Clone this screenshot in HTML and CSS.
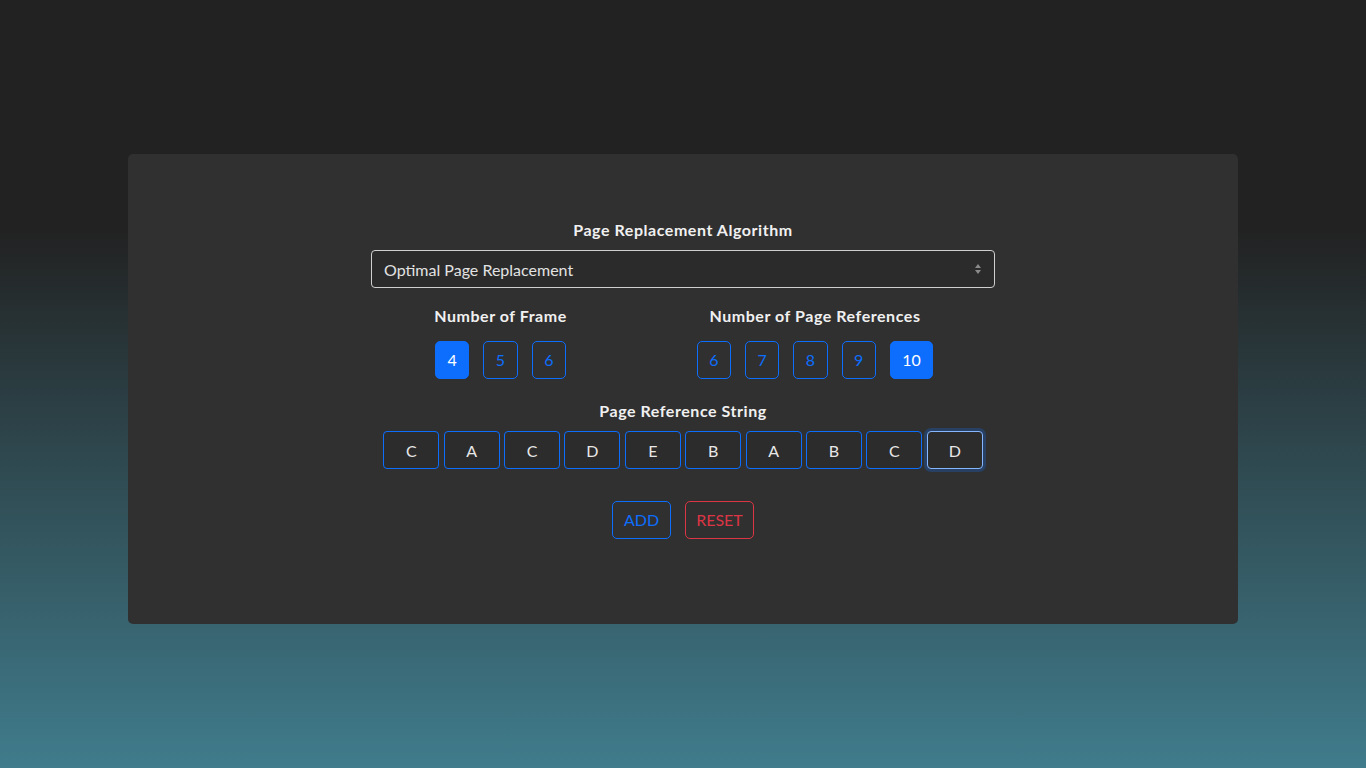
FILE: index.html
```html
<!DOCTYPE html>
<html lang="en">
<head>
<meta charset="utf-8">
<title>Page Replacement Algorithm</title>
<link rel="stylesheet" href="styles.css">
</head>
<body>
<main class="page">
  <section class="card">
    <div class="field">
      <label class="label" for="algo">Page Replacement Algorithm</label>
      <div class="select-wrap">
        <select id="algo" class="select">
          <option>Optimal Page Replacement</option>
        </select>
        <svg class="select-arrows" width="8" height="12" viewBox="0 0 8 12"><path d="M4 1 L7 5 H1 Z M4 11 L7 7 H1 Z" fill="#8a8a8a"/></svg>
      </div>
    </div>

    <div class="counts">
      <div class="count-group group-frames">
        <div class="label">Number of Frame</div>
        <div class="btn-row">
          <button class="btn btn-primary">4</button>
          <button class="btn btn-outline">5</button>
          <button class="btn btn-outline">6</button>
        </div>
      </div>
      <div class="count-group group-refs">
        <div class="label">Number of Page References</div>
        <div class="btn-row">
          <button class="btn btn-outline">6</button>
          <button class="btn btn-outline">7</button>
          <button class="btn btn-outline">8</button>
          <button class="btn btn-outline">9</button>
          <button class="btn btn-primary">10</button>
        </div>
      </div>
    </div>

    <div class="field refs-field">
      <div class="label">Page Reference String</div>
      <div class="refs">
        <input class="ref" value="C">
        <input class="ref" value="A">
        <input class="ref" value="C">
        <input class="ref" value="D">
        <input class="ref" value="E">
        <input class="ref" value="B">
        <input class="ref" value="A">
        <input class="ref" value="B">
        <input class="ref" value="C">
        <input class="ref ref-focus" value="D">
      </div>
    </div>

    <div class="actions">
      <button class="btn btn-outline btn-add">ADD</button>
      <button class="btn btn-outline-danger btn-reset">RESET</button>
    </div>
  </section>
</main>
</body>
</html>
```

FILE: styles.css
```css
* { box-sizing: border-box; }

html, body {
  margin: 0;
  height: 100%;
}

body {
  font-family: "Lato", "Noto Sans", "Liberation Sans", sans-serif;
  font-size: 16px;
  line-height: 1.5;
  color: #e8e8e8;
  background: linear-gradient(to bottom, #222222 0%, #222222 30%, #407c8c 100%);
  min-height: 768px;
}

.page {
  padding-top: 154px;
  display: flex;
  justify-content: center;
}

.card {
  width: 1110px;
  height: 470px;
  background: #303030;
  border-radius: 5px;
  padding-top: 64px;
  display: flex;
  flex-direction: column;
  align-items: center;
}

.field {
  display: flex;
  flex-direction: column;
  align-items: center;
}

.label {
  font-weight: 700;
  font-size: 16px;
  line-height: 24px;
  letter-spacing: 0.55px;
  color: #f0f0f0;
  margin-bottom: 8px;
}

.select-wrap {
  position: relative;
  width: 624px;
}

.select {
  appearance: none;
  -webkit-appearance: none;
  width: 100%;
  height: 38px;
  background: #2b2b2b;
  color: #e2e2e2;
  border: 1px solid #cfcfcf;
  border-radius: 4px;
  padding: 0 36px 0 12px;
  font-family: inherit;
  font-size: 16px;
}

.select-arrows {
  position: absolute;
  right: 13px;
  top: 13px;
  pointer-events: none;
}

.counts {
  display: flex;
  justify-content: center;
  gap: 128px;
  margin-top: 16px;
}

.count-group {
  display: flex;
  flex-direction: column;
  align-items: center;
}

.group-frames { width: 136px; }
.group-refs { width: 237px; }

.count-group .label {
  margin-bottom: 13px;
  white-space: nowrap;
}

.btn-row {
  display: flex;
  gap: 14px;
}

.btn {
  font-family: inherit;
  font-size: 16px;
  line-height: 24px;
  padding: 6px 11.5px;
  border-radius: 5px;
  border: 1px solid transparent;
  background: transparent;
  cursor: pointer;
}

.btn-primary {
  background: #0d6efd;
  border-color: #0d6efd;
  color: #ffffff;
}

.btn-outline {
  border-color: #0d6efd;
  color: #0d6efd;
}

.btn-outline-danger {
  border-color: #dc3545;
  color: #dc3545;
}

.refs-field {
  margin-top: 20px;
}

.refs {
  display: flex;
  gap: 4.4px;
}

.ref {
  width: 56px;
  height: 38px;
  background: #2c2c2c;
  border: 1px solid #0d6efd;
  border-radius: 4px;
  color: #e8e8e8;
  font-family: inherit;
  font-size: 16px;
  text-align: center;
  padding: 0;
}

.ref-focus {
  border-color: #86b7fe;
  box-shadow: 0 0 0 3px rgba(13, 110, 253, 0.25);
}

.actions {
  display: flex;
  gap: 14px;
  margin-top: 32px;
}

.btn-add { width: 59px; padding: 6px 0; }
.btn-reset { width: 69px; padding: 6px 0; }
```
